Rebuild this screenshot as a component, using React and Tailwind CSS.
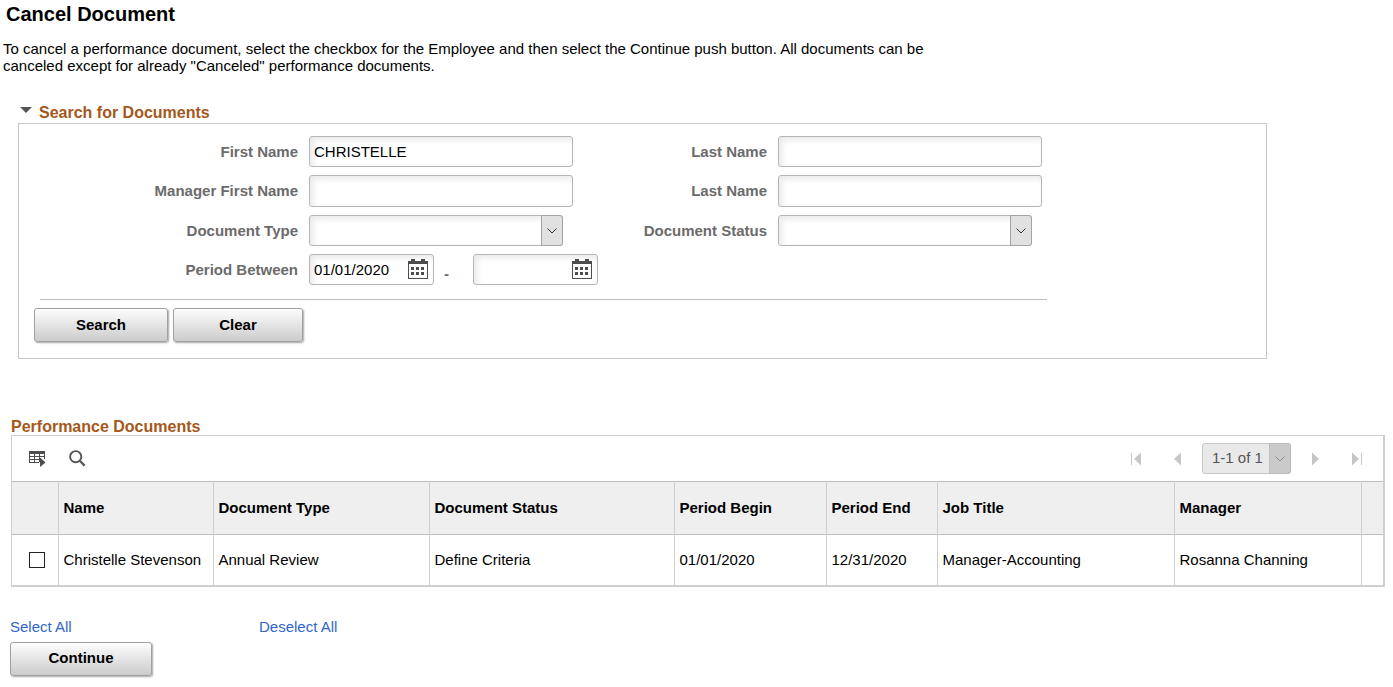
import React, { useState } from 'react';

const COLUMNS = [
  { key: 'name', label: 'Name', width: 'w-[155px]' },
  { key: 'type', label: 'Document Type', width: 'w-[216px]' },
  { key: 'status', label: 'Document Status', width: 'w-[245px]' },
  { key: 'begin', label: 'Period Begin', width: 'w-[152px]' },
  { key: 'end', label: 'Period End', width: 'w-[111px]' },
  { key: 'job', label: 'Job Title', width: 'w-[237px]' },
  { key: 'manager', label: 'Manager', width: 'w-[187px]' },
];

const DOCUMENTS = [
  {
    id: 1,
    name: 'Christelle Stevenson',
    type: 'Annual Review',
    status: 'Define Criteria',
    begin: '01/01/2020',
    end: '12/31/2020',
    job: 'Manager-Accounting',
    manager: 'Rosanna Channing',
  },
];

const FIELD =
  'h-full w-full appearance-none rounded-[3px] border border-[#b5b5b5] bg-white pl-1 text-[15px] text-black shadow-[inset_3px_3px_6px_rgba(0,0,0,0.09)] outline-none';

function ChevronDown() {
  return (
    <svg width="10" height="6" viewBox="0 0 10 6" fill="none" stroke="currentColor" aria-hidden="true">
      <path d="M0.5 0.5 L5 5 L9.5 0.5" />
    </svg>
  );
}

function CalendarIcon() {
  return (
    <svg width="20" height="20" viewBox="0 0 20 20" fill="#4d4d4d" shapeRendering="crispEdges" aria-hidden="true">
      <path d="M0 2h20v18H0z M1 5v14h18V5z" fillRule="evenodd" />
      <path d="M3 0h4v2H3z M13 0h4v2h-4z" />
      <path d="M3 8h3v3H3z M8 8h3v3H8z M13 8h3v3h-3z M3 13h3v3H3z M8 13h3v3H8z M13 13h3v3h-3z" />
    </svg>
  );
}

function GridActionIcon() {
  return (
    <svg width="17" height="16" viewBox="0 0 17 16" fill="#4d4d4d" aria-hidden="true">
      <g shapeRendering="crispEdges">
        <path d="M0 0h16v3H0z M0 3h1v9H0z M5 3h1v9H5z M10 3h1v8h-1z M15 3h1v5h-1z" />
        <path d="M0 5h16v1H0z M0 8h11v1H0z M0 11h10v1H0z" />
      </g>
      <path d="M11 6.5 L16.5 11.5 L11 16z" />
    </svg>
  );
}

function SearchIcon() {
  return (
    <svg width="17" height="17" viewBox="0 0 17 17" fill="none" stroke="#555" aria-hidden="true">
      <circle cx="6.7" cy="6.7" r="5.6" strokeWidth="1.9" />
      <path d="M10.8 10.8 L15.6 15.6" strokeWidth="2.2" />
    </svg>
  );
}

function Label({ htmlFor, children }) {
  return (
    <label htmlFor={htmlFor} className="text-right text-[15px] leading-5 font-bold text-[#6b6b6b]">
      {children}
    </label>
  );
}

function SelectField({ id }) {
  return (
    <div className="relative mr-[10px] h-full">
      <select id={id} className={FIELD} defaultValue="">
        <option value=""></option>
      </select>
      <span className="pointer-events-none absolute inset-y-0 right-0 flex w-[22px] items-center justify-center rounded-r-[3px] border border-[#a3a3a3] bg-[#e1e1e1] text-[#333]">
        <ChevronDown />
      </span>
    </div>
  );
}

function DateField({ id, label, defaultValue }) {
  return (
    <div className="relative h-full w-[125px]">
      <input id={id} aria-label={label} className={FIELD} defaultValue={defaultValue} />
      <button type="button" aria-label={`${label} calendar`} className="absolute top-[5px] right-[6px]">
        <CalendarIcon />
      </button>
    </div>
  );
}

function PushButton({ width, onClick, children }) {
  return (
    <button
      type="button"
      onClick={onClick}
      className={`${width} h-[34px] rounded-[3px] border border-[#a0a0a0] bg-linear-to-b from-[#fdfdfd] to-[#cccccc] text-[15px] font-bold text-black shadow-[1px_1px_2px_rgba(0,0,0,0.35)]`}
    >
      {children}
    </button>
  );
}

// Paging arrow, optionally with the bar for first / last
function PageArrow({ label, back, bar }) {
  return (
    <button type="button" disabled aria-label={label} className="flex w-3 justify-center">
      <svg width="12" height="14" viewBox="0 0 12 14" fill="#c6c6c6" className={back ? '' : 'rotate-180'} aria-hidden="true">
        {bar && <path d="M1 1h1v12h-1z" />}
        <path d="M11 0.5v13L4 7z" />
      </svg>
    </button>
  );
}

export default function App() {
  const [selected, setSelected] = useState([]);
  const [isOpen, setIsOpen] = useState(true);

  const toggle = (id) => {
    setSelected(selected.includes(id) ? selected.filter((s) => s !== id) : [...selected, id]);
  };

  return (
    <main className="bg-white font-['Liberation_Sans',Arial,sans-serif] text-[15px] text-black">
      <h1 className="pt-[2px] pl-[6px] text-[20px] leading-6 font-bold">Cancel Document</h1>
      <p className="mt-[14px] max-w-[940px] pl-[3px] leading-[17px]">
        To cancel a performance document, select the checkbox for the Employee and then select the Continue push button.
        All documents can be canceled except for already "Canceled" performance documents.
      </p>

      {/* Search for Documents */}
      <section className="mt-[28px] mr-[126px] ml-[18px]">
        <h2 className="text-[16px] leading-[21px] font-bold text-[#a6571a]">
          <button type="button" onClick={() => setIsOpen(!isOpen)} className="flex items-center gap-[7px] pl-[2px]">
            <svg width="12" height="7" viewBox="0 0 12 7" fill="#555" className="mb-1" aria-hidden="true">
              <path d="M0 0h12L6 6z" />
            </svg>
            Search for Documents
          </button>
        </h2>
        {isOpen && (
          <div className="border border-[#c8c8c8] pt-3 pb-4">
            <div className="grid grid-cols-[279px_264px_183px_264px] grid-rows-[31px_32px_31px_31px] items-center gap-x-[11px] gap-y-2">
              <Label htmlFor="first-name">First Name</Label>
              <input id="first-name" className={FIELD} defaultValue="CHRISTELLE" />
              <Label htmlFor="last-name">Last Name</Label>
              <input id="last-name" className={FIELD} />

              <Label htmlFor="manager-first">Manager First Name</Label>
              <input id="manager-first" className={FIELD} />
              <Label htmlFor="manager-last">Last Name</Label>
              <input id="manager-last" className={FIELD} />

              <Label htmlFor="doc-type">Document Type</Label>
              <SelectField id="doc-type" />
              <Label htmlFor="doc-status">Document Status</Label>
              <SelectField id="doc-status" />

              <Label htmlFor="period-from">Period Between</Label>
              <div className="col-span-3 flex h-full items-center">
                <DateField id="period-from" label="Period from" defaultValue="01/01/2020" />
                <span className="w-[39px] self-end pl-[10px] font-bold text-[#6b6b6b]">-</span>
                <DateField id="period-to" label="Period to" />
              </div>
            </div>
            <hr className="mt-[14px] ml-[21px] w-[1007px] border-[#bdbdbd]" />
            <div className="mt-2 flex gap-[5px] pl-[15px]">
              <PushButton width="w-[134px]">Search</PushButton>
              <PushButton width="w-[130px]">Clear</PushButton>
            </div>
          </div>
        )}
      </section>

      {/* Performance Documents */}
      <section className="mt-[60px] mr-2 ml-[11px]">
        <h2 className="text-[16px] leading-4 font-bold text-[#a6571a]">Performance Documents</h2>
        <div className="border border-r-2 border-b-2 border-[#cfcfcf]">
          <div className="flex h-[45px] items-center justify-between pr-5 pl-[17px]">
            <div className="flex items-center gap-[23px]">
              <button type="button" aria-label="Grid actions">
                <GridActionIcon />
              </button>
              <button type="button" aria-label="Find">
                <SearchIcon />
              </button>
            </div>
            <div className="flex items-center">
              <PageArrow label="First page" back bar />
              <span className="w-7" />
              <PageArrow label="Previous page" back />
              <div className="relative mx-5 w-[89px]">
                <select
                  disabled
                  aria-label="Rows shown"
                  className="h-[31px] w-full appearance-none rounded-[3px] border border-[#c8c8c8] bg-[#e9e9e9] pl-[9px] text-[15px] text-[#555] opacity-100"
                >
                  <option>1-1 of 1</option>
                </select>
                <span className="pointer-events-none absolute inset-y-0 right-0 flex w-[22px] items-center justify-center rounded-r-[3px] border border-[#bcbcbc] bg-[#cacaca] text-[#939393]">
                  <ChevronDown />
                </span>
              </div>
              <PageArrow label="Next page" />
              <span className="w-7" />
              <PageArrow label="Last page" bar />
            </div>
          </div>
          <table className="w-full table-fixed border-collapse text-left">
            <thead>
              <tr className="h-[53px] border-y border-[#bdbdbd] bg-[#efefef]">
                <th className="w-[46px]"></th>
                {COLUMNS.map((col) => (
                  <th key={col.key} className={`${col.width} border-l border-[#cfcfcf] pl-[5px] font-bold`}>
                    {col.label}
                  </th>
                ))}
                <th className="w-[22px] border-l border-[#cfcfcf]"></th>
              </tr>
            </thead>
            <tbody>
              {DOCUMENTS.map((doc) => (
                <tr key={doc.id} className="h-[50px]">
                  <td>
                    <input
                      type="checkbox"
                      aria-label={`Select ${doc.name}`}
                      checked={selected.includes(doc.id)}
                      onChange={() => toggle(doc.id)}
                      className="ml-[17px] block size-4 appearance-none border border-[#222] bg-white checked:bg-[#222]"
                    />
                  </td>
                  {COLUMNS.map((col) => (
                    <td key={col.key} className="border-l border-[#cfcfcf] pl-[5px]">
                      {doc[col.key]}
                    </td>
                  ))}
                  <td className="border-l border-[#cfcfcf]"></td>
                </tr>
              ))}
            </tbody>
          </table>
        </div>
      </section>

      <div className="mt-[30px] flex pl-[10px] leading-5 text-[#2f66c9]">
        <a href="#select-all" className="w-[249px]" onClick={() => setSelected(DOCUMENTS.map((d) => d.id))}>
          Select All
        </a>
        <a href="#deselect-all" onClick={() => setSelected([])}>
          Deselect All
        </a>
      </div>
      <div className="mt-[5px] pb-[10px] pl-[10px]">
        <PushButton width="w-[142px]">Continue</PushButton>
      </div>
    </main>
  );
}
